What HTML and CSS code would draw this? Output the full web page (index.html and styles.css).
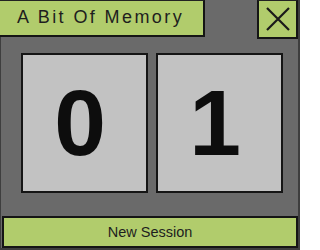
FILE: index.html
```html
<!DOCTYPE html>
<html>
<head>
<meta charset="utf-8">
<link rel="stylesheet" href="styles.css">
</head>
<body>
<div class="app">
  <div class="header">
    <div class="title">A Bit Of Memory</div>
    <div class="close">
      <svg width="24" height="24" viewBox="0 0 24 24"><path d="M1 1 L23 23 M23 1 L1 23" stroke="#1a1a1a" stroke-width="2.2" fill="none"/></svg>
    </div>
  </div>
  <div class="cards">
    <div class="card">0</div>
    <div class="card">1</div>
  </div>
  <div class="button">New Session</div>
</div>
</body>
</html>
```
FILE: styles.css
```css
html, body {
  margin: 0;
  padding: 0;
}
body {
  width: 300px;
  height: 250px;
  overflow: hidden;
  font-family: "Liberation Sans", Arial, sans-serif;
}
.app {
  width: 300px;
  height: 250px;
  box-sizing: border-box;
  background: #6a6a6a;
  border-left: 1px solid #3e3e3e;
  border-right: 2px solid #3e3e3e;
  border-bottom: 2px solid #3e3e3e;
  display: flex;
  flex-direction: column;
}
.header {
  display: flex;
  justify-content: space-between;
  align-items: flex-start;
  height: 39px;
}
.title {
  width: 205px;
  height: 37px;
  box-sizing: border-box;
  margin-left: -1px;
  background: #b1cc6c;
  border-top: 1px solid #222;
  border-right: 2px solid #151515;
  border-bottom: 2px solid #151515;
  padding-left: 17px;
  font-size: 18px;
  line-height: 32px;
  letter-spacing: 2.4px;
  color: #1e1e1e;
  white-space: nowrap;
}
.close {
  width: 41px;
  height: 39px;
  box-sizing: border-box;
  background: #b1cc6c;
  border: 2px solid #151515;
  border-top: 1px solid #222;
  display: flex;
  align-items: center;
  justify-content: center;
}
.cards {
  display: flex;
  gap: 8px;
  margin-top: 14px;
  padding-left: 20px;
}
.card {
  width: 127px;
  height: 140px;
  box-sizing: border-box;
  background: #c2c2c2;
  border: 2px solid #151515;
  display: flex;
  align-items: center;
  justify-content: center;
  padding-right: 9px;
  font-size: 93px;
  line-height: 93px;
  font-weight: bold;
  color: #0d0d0d;
}
.button {
  margin-top: 23px;
  margin-left: 1px;
  margin-right: 0;
  height: 32px;
  box-sizing: border-box;
  background: #b1cc6c;
  border: 2px solid #151515;
  display: flex;
  align-items: center;
  justify-content: center;
  font-size: 14.5px;
  color: #1e1e1e;
}
```
